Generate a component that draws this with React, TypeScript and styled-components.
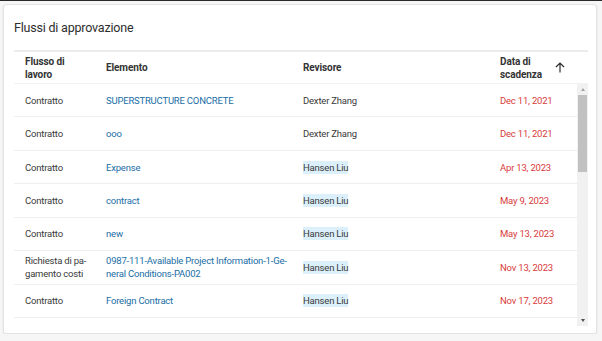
import React from "react";
import styled, { createGlobalStyle } from "styled-components";

const GlobalStyle = createGlobalStyle`
  html, body {
    margin: 0;
    padding: 0;
    background: #f6f6f6;
    font-family: Roboto, "Noto Sans", sans-serif;
  }
  body {
    border-top: 1px solid #2a2a2a;
  }
`;

const Card = styled.div`
  box-sizing: border-box;
  margin: 3px 5px 0 3px;
  height: 330px;
  background: #fff;
  border: 1px solid #e3e3e3;
  border-radius: 3px;
  box-shadow: 0 1px 2px rgba(0, 0, 0, 0.08);
  padding: 0 8px 0 10px;
  display: flex;
  flex-direction: column;
`;

const Title = styled.h2`
  margin: 0;
  padding: 15px 0 0;
  height: 45px;
  box-sizing: border-box;
  font-size: 12.5px;
  font-weight: 400;
  letter-spacing: -0.2px;
  color: #2d2d2d;
`;

const HeaderRow = styled.div`
  display: grid;
  grid-template-columns: 81px 197px 197px 1fr 33px;
  align-items: center;
  height: 34px;
  box-sizing: border-box;
  border-top: 2px solid #ebebeb;
  border-bottom: 1px solid #f2f2f2;
`;

const HeadCell = styled.div`
  padding-left: 11px;
  font-size: 10px;
  font-weight: 700;
  line-height: 13px;
  letter-spacing: -0.1px;
  color: #333;
`;

const SortIcon = styled.svg`
  width: 10px;
  height: 11px;
`;

const Body = styled.div`
  display: flex;
  height: 242px;
`;

const Rows = styled.div`
  flex: 1;
  overflow: hidden;
`;

const Scrollbar = styled.div`
  width: 11px;
  display: flex;
  flex-direction: column;
  background: #f1f1f1;
`;

const ScrollButton = styled.div<{ $down?: boolean }>`
  height: 11px;
  display: flex;
  align-items: center;
  justify-content: center;
  &::after {
    content: "";
    border-left: 2.5px solid transparent;
    border-right: 2.5px solid transparent;
    ${(p) =>
      p.$down
        ? "border-top: 3px solid #505050;"
        : "border-bottom: 3px solid #a3a3a3;"}
  }
`;

const Thumb = styled.div`
  height: 77px;
  margin: 0 1px;
  background: #c1c1c1;
`;

const Track = styled.div`
  flex: 1;
`;

const Row = styled.div`
  display: grid;
  grid-template-columns: 81px 197px 197px 1fr;
  align-items: center;
  height: 33.43px;
  box-sizing: border-box;
  border-bottom: 1px solid #eeeeee;
`;

const Cell = styled.div<{ $tone?: "text" | "link" | "due" }>`
  padding-left: 11px;
  padding-right: 1px;
  font-size: 9.5px;
  line-height: 13px;
  letter-spacing: -0.2px;
  color: ${(p) =>
    p.$tone === "link" ? "#1a6ea6" : p.$tone === "due" ? "#d83b3b" : "#3a3a3a"};
`;

const Name = styled.span<{ $marked?: boolean }>`
  background: ${(p) => (p.$marked ? "#dcf0fb" : "transparent")};
  padding: 1px 0;
`;

type Item = {
  flow: string;
  element: string;
  reviewer: string;
  marked?: boolean;
  due: string;
};

const items: Item[] = [
  { flow: "Contratto", element: "SUPERSTRUCTURE CONCRETE", reviewer: "Dexter Zhang", due: "Dec 11, 2021" },
  { flow: "Contratto", element: "ooo", reviewer: "Dexter Zhang", due: "Dec 11, 2021" },
  { flow: "Contratto", element: "Expense", reviewer: "Hansen Liu", marked: true, due: "Apr 13, 2023" },
  { flow: "Contratto", element: "contract", reviewer: "Hansen Liu", marked: true, due: "May 9, 2023" },
  { flow: "Contratto", element: "new", reviewer: "Hansen Liu", marked: true, due: "May 13, 2023" },
  {
    flow: "Richiesta di pa\u00adgamento costi",
    element: "0987-111-Available Project Information-1-Ge\u00adneral Conditions-PA002",
    reviewer: "Hansen Liu",
    marked: true,
    due: "Nov 13, 2023",
  },
  { flow: "Contratto", element: "Foreign Contract", reviewer: "Hansen Liu", marked: true, due: "Nov 17, 2023" },
];

function App() {
  return (
    <>
      <GlobalStyle />
      <Card>
        <Title>Flussi di approvazione</Title>
        <HeaderRow>
          <HeadCell>
            Flusso di
            <br />
            lavoro
          </HeadCell>
          <HeadCell>Elemento</HeadCell>
          <HeadCell>Revisore</HeadCell>
          <HeadCell>
            Data di
            <br />
            scadenza
          </HeadCell>
          <SortIcon viewBox="0 0 10 11">
            <path d="M5 10.5V1M1 5l4-4 4 4" fill="none" stroke="#2d2d2d" strokeWidth="1.2" />
          </SortIcon>
        </HeaderRow>
        <Body>
          <Rows>
            {items.map((x, i) => (
              <Row key={i}>
                <Cell>{x.flow}</Cell>
                <Cell $tone="link">{x.element}</Cell>
                <Cell>
                  <Name $marked={x.marked}>{x.reviewer}</Name>
                </Cell>
                <Cell $tone="due">{x.due}</Cell>
              </Row>
            ))}
          </Rows>
          <Scrollbar>
            <ScrollButton />
            <Thumb />
            <Track />
            <ScrollButton $down />
          </Scrollbar>
        </Body>
      </Card>
    </>
  );
}

export default App;
